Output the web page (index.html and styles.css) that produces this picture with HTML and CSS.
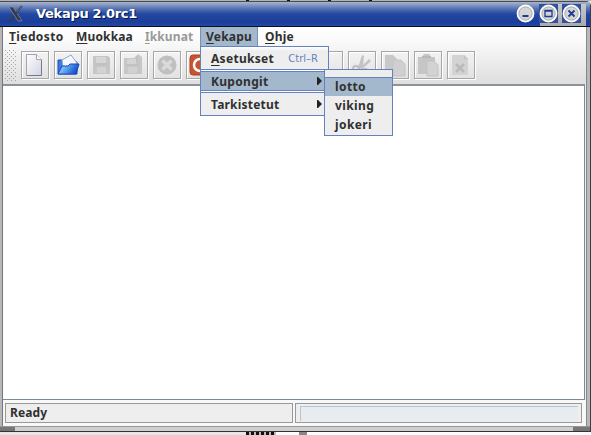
FILE: index.html
```
<!DOCTYPE html>
<html lang="fi">
<head>
<meta charset="utf-8">
<title>Vekapu 2.0rc1</title>
<link rel="stylesheet" href="styles.css">
</head>
<body>
<div class="desktop-top"><i></i><i></i><i></i><i></i></div>
<div class="window">
  <header class="titlebar">
    <svg class="logo" width="18" height="18" viewBox="0 0 18 18"><path d="M2 2h4l9 14h-4z" fill="#303948" stroke="#8993a2" stroke-width=".7"/><path d="M15 1 9.500 8M7 11l-5 6" stroke="#343d4c" stroke-width="2"/><path d="M15.500 1 10 7" stroke="#8491a9" stroke-width=".6"/></svg>
    <h1>Vekapu 2.0rc1</h1>
    <div class="controls">
      <svg width="19" height="19" viewBox="0 0 19 19"><circle cx="9.500" cy="9.500" r="8" fill="#d5d5d5" stroke="#fff" stroke-width="1.800"/><circle cx="9.500" cy="9.500" r="6.600" fill="none" stroke="#b0b0b0"/><path d="M6.500 12h6" stroke="#1c3b91" stroke-width="2"/></svg>
      <svg width="19" height="19" viewBox="0 0 19 19"><path d="M0 0h19v19H0z" fill="#3451a0"/><circle cx="9.500" cy="9.500" r="8" fill="#d5d5d5" stroke="#fff" stroke-width="1.800"/><circle cx="9.500" cy="9.500" r="6.600" fill="none" stroke="#b0b0b0"/><path d="M6 6.500h7v6H6zM6 7h7" fill="none" stroke="#1c3b91" stroke-width="1.300"/></svg>
      <svg width="19" height="19" viewBox="0 0 19 19"><path d="M0 0h19v19H0z" fill="#3451a0"/><circle cx="9.500" cy="9.500" r="8" fill="#d5d5d5" stroke="#fff" stroke-width="1.800"/><circle cx="9.500" cy="9.500" r="6.600" fill="none" stroke="#b0b0b0"/><path d="m6.500 6.500 6 6m0-6-6 6" stroke="#1c3b91" stroke-width="1.800"/></svg>
    </div>
  </header>
  <div class="body">
    <div class="chrome">
      <nav class="menubar">
        <span class="m1"><u>T</u>iedosto</span><span class="m2"><u>M</u>uokkaa</span><span class="m3 off"><u>I</u>kkunat</span><span class="m4 open"><u>V</u>ekapu</span><span class="m5"><u>O</u>hje</span>
      </nav>
      <div class="toolbar">
        <svg class="grip" width="11" height="31"><defs><pattern id="dots" width="4" height="4" patternUnits="userSpaceOnUse"><path d="M0 0h1v1H0zM2 2h1v1H2z" fill="#a5a5a5"/></pattern></defs><path d="M0 0h11v31H0z" fill="url(#dots)"/></svg>
        <div class="tools">
          <b><svg viewBox="0 0 26 26"><defs><linearGradient id="paper" x2="1" y2="1"><stop stop-color="#fff"/><stop offset="1" stop-color="#d0d3e2"/></linearGradient></defs><path d="M4.500 2.500h10l5 5v16h-15z" fill="url(#paper)" stroke="#a3a5ae"/><path d="M14.500 2.500v5h5" fill="#fff" stroke="#a3a5ae"/><path d="M5 23.500h14.500V8" fill="none" stroke="#777a88"/></svg></b>
          <b><svg viewBox="0 0 26 26"><defs><linearGradient id="folder" x2="1" y2=".3"><stop stop-color="#b8e2ff"/><stop offset=".5" stop-color="#5aa2f0"/><stop offset="1" stop-color="#1550c9"/></linearGradient></defs><path d="M3 8h5l2 2h12v12H3z" fill="#3a7be0" stroke="#1d4cb0"/><path d="m7 8 9-5 6 8-2 4H8z" fill="#f4f7ff" stroke="#8ea6d6"/><path d="m3 22 4-8h6l2-2h9l-3 10z" fill="url(#folder)" stroke="#164abb"/></svg></b>
          <b><svg viewBox="0 0 26 26"><path d="M5 4h15l2 2v16H5z" fill="#c6c6c6"/><path d="M8 5h10v6H8z" fill="#d6d6d6"/><path d="M9 15h9v6H9z" fill="#d3d3d3"/><path d="M7 12h13" stroke="#bababa"/></svg></b>
          <b><svg viewBox="0 0 26 26"><path d="M3 6h10l4-4 4 3v17H3z" fill="#c7c7c7"/><path d="M6 7h9v5H6z" fill="#d4d4d4"/><path d="M7 15h9v6H7z" fill="#d1d1d1"/><path d="M5 13h13M16 4v6" stroke="#bbb"/></svg></b>
          <b><svg viewBox="0 0 26 26"><circle cx="13" cy="13" r="9.500" fill="#bfbfbf"/><path d="m8.500 8.500 9 9m0-9-9 9" stroke="#dadada" stroke-width="3.500"/></svg></b>
          <b><svg viewBox="0 0 26 26"><rect x="3" y="3" width="20" height="20" rx="3" fill="#c8532f" stroke="#a94327"/><circle cx="13" cy="13" r="6" fill="none" stroke="#fff" stroke-width="2.500"/></svg></b>
        </div>
        <div class="tools edit">
          <b></b>
          <b><svg viewBox="0 0 26 26"><path d="m9 16 4-13 2 1-1 9 6-6 2 2-9 8" fill="#c4c4c4"/><circle cx="7" cy="17" r="3" fill="none" stroke="#bfbfbf" stroke-width="2"/><circle cx="16" cy="20" r="3" fill="none" stroke="#bfbfbf" stroke-width="2"/></svg></b>
          <b><svg viewBox="0 0 26 26"><path d="M3 3h8l4 4v13H3z" fill="#c8c8c8"/><path d="M11 8h8l4 4v12H11z" fill="#d0d0d0" stroke="#c4c4c4"/></svg></b>
          <b><svg viewBox="0 0 26 26"><path d="M3 5h4l2-3h5l2 3h4v17H3z" fill="#c6c6c6"/><path d="M7 5h9" stroke="#b8b8b8" stroke-width="2"/><path d="M12 9h7l4 4v11H12z" fill="#d3d3d3" stroke="#c3c3c3"/></svg></b>
          <b><svg viewBox="0 0 26 26"><path d="M4 3h12l4 4v16H4z" fill="#d3d3d3"/><path d="M16 3v4h4" fill="#c4c4c4"/><path d="m8 12 8 8m0-8-8 8" stroke="#bababa" stroke-width="2.500"/></svg></b>
        </div>
      </div>
    </div>
    <main></main>
    <footer><div class="status">Ready</div><div class="progress"><div></div></div></footer>
  </div>
  <div class="resize"></div>
</div>
<div class="desktop-bottom"><i></i><i></i></div>
<div class="menu">
  <div class="row first"><span class="t1"><u>A</u>setukset</span><kbd>Ctrl–R</kbd></div>
  <div class="row mid sel"><span class="t2">Kupongit</span><svg width="5" height="8"><path d="M0 0h1l4 4-4 4H0z" fill="#222"/></svg></div>
  <div class="row last"><span class="t3">Tarkistetut</span><svg width="5" height="8"><path d="M0 0h1l4 4-4 4H0z" fill="#222"/></svg></div>
</div>
<div class="submenu"><div class="sel">lotto</div><div>viking</div><div>jokeri</div></div>
</body>
</html>
```

FILE: styles.css
```
* { box-sizing: border-box; }
body { margin: 0; width: 591px; height: 435px; overflow: hidden; display: flex; flex-direction: column; background: #ededed; color: #303030; font: bold 12px/18px "Noto Sans", sans-serif; letter-spacing: .4px; }
svg { display: block; flex: none; }
u { text-decoration: underline; text-decoration-thickness: 1px; text-underline-offset: 2px; }
.desktop-top { height: 1px; background: #b1b5ae; display: flex; gap: 38px; padding-left: 246px; }
.desktop-top i { width: 3px; background: #111; }
.window { height: 431px; border-top: 1px solid #454d5b; border-right: 1px solid #3b3f47; border-radius: 0 5px 0 0; background: #b8b8b8; display: flex; flex-direction: column; }
.titlebar { height: 25px; flex: none; display: flex; align-items: center; padding: 0 0 1px 7px; border-bottom: 1px solid #080d22; background: linear-gradient(#abb5cc 0, #8698c1 3px, #526fb1 7px, #2348a0 12px, #1c3d9b 20px, #2149a3); }
h1 { margin: 0 0 0 11px; font: bold 13px/20px "DejaVu Sans", sans-serif; letter-spacing: -.3px; color: #fff; text-shadow: 1px 1px #071747; width: 110px; white-space: nowrap; }
.controls { margin-left: auto; align-self: stretch; display: flex; gap: 4px; padding: 2px 9px 0 0; position: relative; }
.controls::before { content: ""; position: absolute; left: 24px; right: 4px; top: 2px; bottom: -1px; background: linear-gradient(#c8c9c8, #aaaaaa); }
.controls svg { position: relative; }
.body { height: 399px; flex: none; margin-left: 2px; margin-right: 3px; border-left: 1px solid #73777d; border-right: 1px solid #85898f; background: #eee; display: flex; flex-direction: column; }
.chrome { height: 57px; flex: none; background: linear-gradient(#fff, #fafafa 14px, #dedede); }
.menubar { height: 19px; display: flex; }
.menubar span { height: 19px; padding-left: 6px; white-space: nowrap; line-height: 19px; }
.m1 { width: 67px; }
.m2 { width: 69px; letter-spacing: .15px; }
.m3 { width: 61px; letter-spacing: .1px; }
.m4 { width: 58px; }
.m5 { width: 45px; }
.menubar .m5 { padding-left: 7px; letter-spacing: .2px; }
.off { color: #999; }
.open { background: #a3b8cc; border-left: 1px solid #7992b4; border-right: 1px solid #7992b4; }
.menubar .open { padding-left: 5px; letter-spacing: .2px; }
.toolbar { display: flex; padding: 4px 0 0 2px; }
.tools { display: flex; gap: 5px; margin: 1px 0 0 5px; }
.tools b { width: 28px; height: 28px; border: 1px solid #a6a6a6; box-shadow: 1px 1px #fff, inset 1px 1px #fff; }
.tools svg { width: 26px; height: 26px; }
.edit { margin-left: 101px; }
main { flex: 1; border: 1px solid #7a8a99; border-top: 2px solid #8b9298; border-left: 0; margin-right: 1px; background: #fff; }
footer { height: 26px; display: flex; gap: 2px; padding: 3px 4px 3px 2px; background: #f8f8f8; }
.status, .progress { border: 1px solid #999; background: #eee; height: 20px; }
.status { width: 288px; padding-left: 4px; letter-spacing: .1px; }
.progress { flex: 1; padding: 2px 3px 1px 4px; }
.progress div { height: 15px; border-top: 1px solid #b8c5d3; border-left: 1px solid #b8c5d3; background: #e9ecef; }
.resize { height: 6px; border-top: 1px solid #969696; border-bottom: 1px solid #343434; background: linear-gradient(90deg, #777 15px, #d0d0d0 15px 573px, #777 573px); }
.desktop-bottom { height: 3px; display: flex; gap: 30px; padding-left: 246px; background: linear-gradient(90deg, #e6e6e6 246px, #fff 246px); }
.desktop-bottom i { width: 30px; background: repeating-linear-gradient(90deg, #111 0 3px, #bbb 3px 5px); }
.desktop-bottom i + i { width: 8px; margin-left: -7px; background: #888; }
.menu { position: absolute; left: 200px; top: 46px; width: 129px; height: 70px; border: 1px solid #6382bf; background: #eee; }
.row { display: flex; align-items: center; padding-left: 10px; }
.row span, kbd { white-space: nowrap; padding-top: 2px; }
.row svg { margin-left: auto; margin-right: 6px; }
.t1, .t2 { letter-spacing: .3px; }
.t3 { letter-spacing: .2px; }
.first { height: 23px; border-bottom: 1px solid #6382bf; background: linear-gradient(#fff, #eee 4px); box-shadow: 0 1px #fff; }
.mid { height: 20px; margin-top: 1px; border-top: 1px solid #6382bf; border-bottom: 1px solid #6382bf; }
.last { height: 22px; margin-top: 1px; border-top: 1px solid #6382bf; box-shadow: 0 -1px #fff; }
.sel { background-color: #a3b8cc; }
kbd { margin-left: auto; padding-right: 10px; font: 10px/18px "DejaVu Sans", sans-serif; letter-spacing: 0; color: #6382bf; }
.submenu { position: absolute; left: 324px; top: 69px; width: 69px; height: 67px; padding-top: 7px; border: 1px solid #6382bf; background: #eee; line-height: 20px; }
.submenu div { height: 19px; padding-left: 10px; }
.submenu .sel { border-top: 1px solid #6382bf; line-height: 17px; }
```
